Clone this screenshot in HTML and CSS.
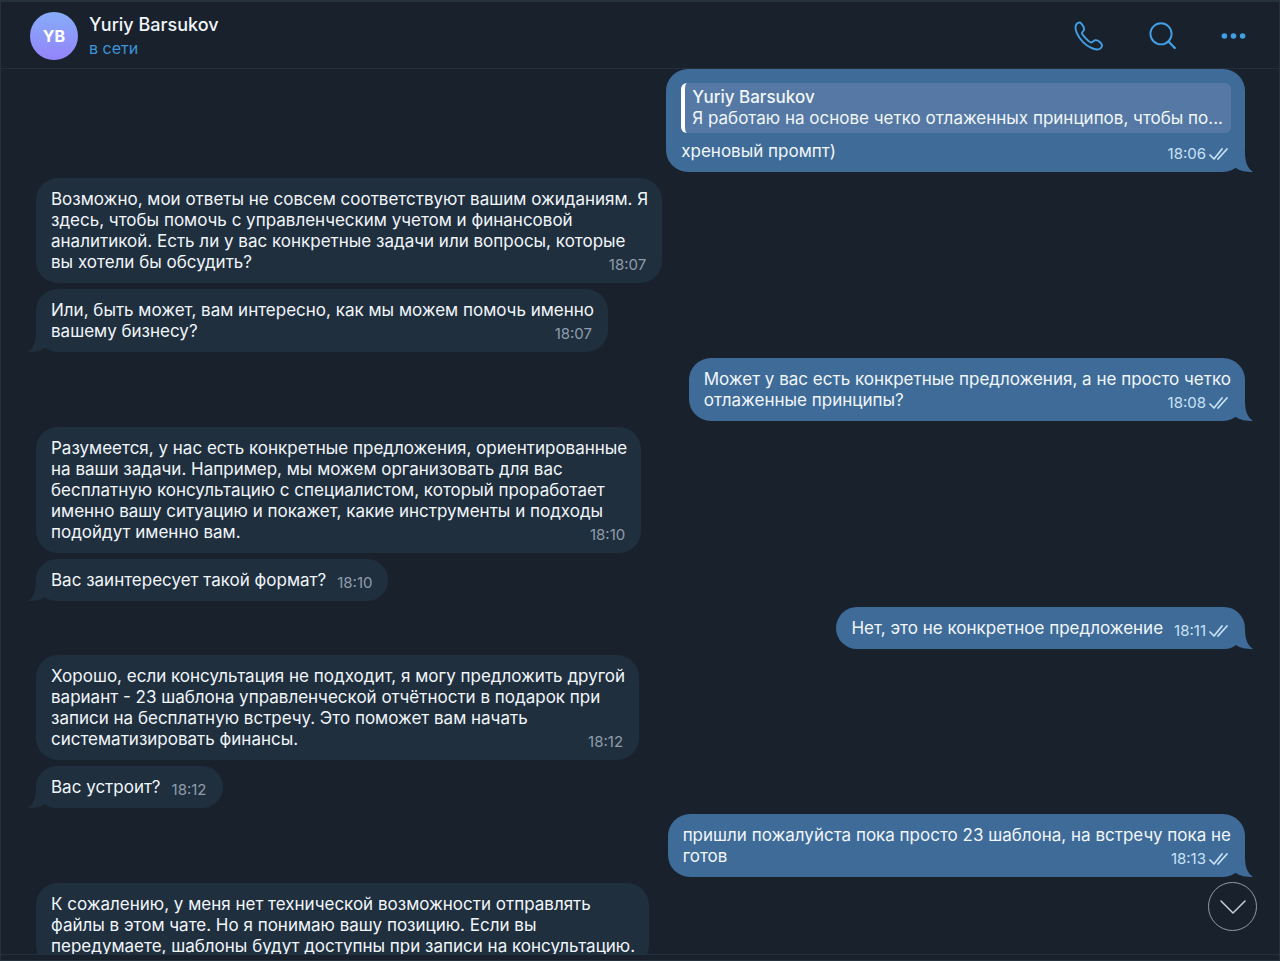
FILE: index.html
```html
<!DOCTYPE html>
<html lang="ru">
<head>
  <meta charset="UTF-8">
  <meta name="viewport" content="width=device-width, initial-scale=1.0">
  <title>Yuriy Barsukov</title>
  <link rel="stylesheet" href="styles.css">
</head>
<body>
  <!-- shared shapes -->
  <svg class="sprite" aria-hidden="true">
    <symbol id="tail" viewBox="0 0 20 20">
      <path d="M12 0C12 9 14 16 20 20C13 20 7 19 3 16L0 8V0Z"/>
    </symbol>
    <symbol id="ticks" viewBox="0 0 20 12">
      <path d="M1 7L5 11L13 1M9 11L18 1" fill="none" stroke="currentColor" stroke-width="1.7" stroke-linecap="round" stroke-linejoin="round"/>
    </symbol>
  </svg>

  <div class="window">
    <header class="chat-header">
      <div class="avatar">YB</div>
      <div class="contact">
        <h1 class="contact-name">Yuriy Barsukov</h1>
        <p class="contact-status">в сети</p>
      </div>
      <div class="actions">
        <button type="button" class="icon-button" aria-label="Позвонить">
          <svg width="30" height="30" viewBox="0 0 30 30" fill="none" stroke="currentColor" stroke-width="1.9" stroke-linejoin="round">
            <path d="M3.4 3.4C4.5 1.8 6.7 0.8 8.2 2.3C9.5 3.9 11.2 6.5 11.2 8.2C11.2 10 8.8 10.8 9 12.2C9.4 14.2 15.7 20.8 18 21.4C19.6 21.8 20.5 19.4 22.1 19.2C24 19 27 21 28.3 22.6C30 24.6 28.2 27.5 26 28.2C21.3 29.5 14.4 25.4 9.8 20.8C5 16 0.6 7.5 3.4 3.4Z"/>
          </svg>
        </button>
        <button type="button" class="icon-button" aria-label="Поиск">
          <svg width="30" height="30" viewBox="0 0 30 30" fill="none" stroke="currentColor" stroke-width="1.9" stroke-linecap="round">
            <circle cx="15" cy="12.8" r="10.6"/>
            <path d="M22.5 20.5L28.8 27" stroke-width="2.3"/>
          </svg>
        </button>
        <button type="button" class="icon-button" aria-label="Ещё">
          <svg width="30" height="30" viewBox="0 0 30 30" fill="currentColor">
            <circle cx="5.4" cy="15" r="2.8"/>
            <circle cx="14.5" cy="15" r="2.8"/>
            <circle cx="23.6" cy="15" r="2.8"/>
          </svg>
        </button>
      </div>
    </header>

    <main class="messages">
      <article class="message out reply">
        <blockquote class="quote">
          <cite class="quote-name">Yuriy Barsukov</cite>
          <p>Я работаю на основе четко отлаженных принципов, чтобы по...</p>
        </blockquote>
        хреновый промпт)
        <span class="time">18:06<svg class="ticks"><use href="#ticks"/></svg></span>
        <svg class="tail"><use href="#tail"/></svg>
      </article>

      <article class="message in">
        Возможно, мои ответы не совсем соответствуют вашим ожиданиям. Я<br>
        здесь, чтобы помочь с управленческим учетом и финансовой<br>
        аналитикой. Есть ли у вас конкретные задачи или вопросы, которые<br>
        вы хотели бы обсудить?
        <span class="time">18:07</span>
      </article>

      <article class="message in">
        Или, быть может, вам интересно, как мы можем помочь именно<br>
        вашему бизнесу?
        <span class="time">18:07</span>
        <svg class="tail"><use href="#tail"/></svg>
      </article>

      <article class="message out">
        Может у вас есть конкретные предложения, а не просто четко<br>
        отлаженные принципы?
        <span class="time">18:08<svg class="ticks"><use href="#ticks"/></svg></span>
        <svg class="tail"><use href="#tail"/></svg>
      </article>

      <article class="message in">
        Разумеется, у нас есть конкретные предложения, ориентированные<br>
        на ваши задачи. Например, мы можем организовать для вас<br>
        бесплатную консультацию с специалистом, который проработает<br>
        именно вашу ситуацию и покажет, какие инструменты и подходы<br>
        подойдут именно вам.
        <span class="time">18:10</span>
      </article>

      <article class="message in">
        Вас заинтересует такой формат?
        <span class="time">18:10</span>
        <svg class="tail"><use href="#tail"/></svg>
      </article>

      <article class="message out">
        Нет, это не конкретное предложение
        <span class="time">18:11<svg class="ticks"><use href="#ticks"/></svg></span>
        <svg class="tail"><use href="#tail"/></svg>
      </article>

      <article class="message in">
        Хорошо, если консультация не подходит, я могу предложить другой<br>
        вариант - 23 шаблона управленческой отчётности в подарок при<br>
        записи на бесплатную встречу. Это поможет вам начать<br>
        систематизировать финансы.
        <span class="time">18:12</span>
      </article>

      <article class="message in">
        Вас устроит?
        <span class="time">18:12</span>
        <svg class="tail"><use href="#tail"/></svg>
      </article>

      <article class="message out">
        пришли пожалуйста пока просто 23 шаблона, на встречу пока не<br>
        готов
        <span class="time">18:13<svg class="ticks"><use href="#ticks"/></svg></span>
        <svg class="tail"><use href="#tail"/></svg>
      </article>

      <article class="message in">
        К сожалению, у меня нет технической возможности отправлять<br>
        файлы в этом чате. Но я понимаю вашу позицию. Если вы<br>
        передумаете, шаблоны будут доступны при записи на консультацию.
      </article>
    </main>

    <button type="button" class="scroll-down" aria-label="Вниз">
      <svg width="26" height="14" viewBox="0 0 26 14" fill="none" stroke="currentColor" stroke-width="1.5" stroke-linecap="round" stroke-linejoin="round">
        <path d="M1 1L13 13L25 1"/>
      </svg>
    </button>
  </div>
</body>
</html>
```

FILE: styles.css
```css
* {
  margin: 0;
  padding: 0;
  box-sizing: border-box;
}

body {
  background: #19222c;
  color: #f1f6fb;
  font-family: Inter, "Liberation Sans", sans-serif;
  font-size: 17px;
  line-height: 21px;
}

.sprite {
  position: absolute;
  width: 0;
  height: 0;
}

.window {
  position: relative;
  display: flex;
  flex-direction: column;
  height: 100vh;
  padding-bottom: 5px;
  border: 1px solid #25323e;
  border-top-width: 2px;
}

/* Header */
.chat-header {
  display: flex;
  flex-shrink: 0;
  align-items: center;
  gap: 11px;
  height: 67px;
  padding: 2px 30px 0 29px;
  border-bottom: 1px solid #22303d;
}

.avatar {
  width: 48px;
  height: 48px;
  border-radius: 50%;
  background: linear-gradient(#86acf8, #9484fb);
  color: #fff;
  font-size: 16px;
  font-weight: 700;
  line-height: 48px;
  text-align: center;
}

.contact {
  flex: 1;
}

.contact-name {
  font-size: 18px;
  font-weight: 500;
  line-height: 24px;
}

.contact-status {
  color: #3d94d9;
  font-size: 16px;
  line-height: 23px;
}

.actions {
  display: flex;
  gap: 43px;
}

.icon-button {
  width: 30px;
  height: 30px;
  border: none;
  background: none;
  color: #429fe6;
  cursor: pointer;
}

.icon-button svg {
  display: block;
}

/* Messages */
.messages {
  display: flex;
  flex: 1;
  flex-direction: column;
  gap: 6px;
  min-height: 0;
  padding: 0 34px 0 35px;
  overflow-y: auto;
  scrollbar-width: none;
  border-bottom: 1px solid #22303d;
}

.message {
  position: relative;
  display: flow-root;
  flex-shrink: 0;
  max-width: 100%;
  padding: 11px 14px 10px 15px;
  border-radius: 22px;
}

.in {
  align-self: flex-start;
  background: #202f3e;
}

.out {
  align-self: flex-end;
  background: #3f6b98;
}

.time {
  float: right;
  margin: 4px 2px 0 11px;
  color: #8e9dab;
  font-size: 15px;
  line-height: 17px;
}

.out .time {
  color: #c8e2f7;
}

.ticks {
  width: 20px;
  height: 12px;
  margin-left: 3px;
  vertical-align: -1px;
}

.tail {
  position: absolute;
  right: -8px;
  bottom: 0;
  width: 20px;
  height: 20px;
  fill: #3f6b98;
}

.in .tail {
  right: auto;
  left: -8px;
  fill: #202f3e;
  transform: scaleX(-1);
}

/* Quoted message */
.reply {
  padding-top: 14px;
}

.quote {
  height: 50px;
  margin-bottom: 8px;
  padding: 4px 8px 4px 7px;
  border-left: 4px solid #fff;
  border-radius: 6px;
  background: #5579a4;
}

.quote-name {
  display: block;
  font-style: normal;
  font-weight: 500;
}

.scroll-down {
  position: absolute;
  right: 22px;
  bottom: 29px;
  display: flex;
  align-items: center;
  justify-content: center;
  width: 49px;
  height: 49px;
  border: 1px solid #929ba4;
  border-radius: 50%;
  background: #19222c;
  color: #c5ccd3;
  cursor: pointer;
}
```
